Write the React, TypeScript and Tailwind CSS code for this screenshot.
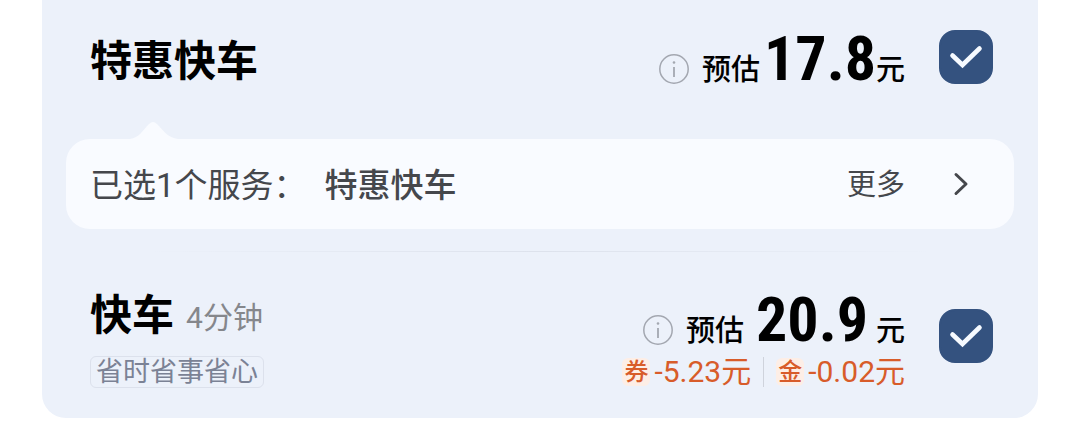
import { useState } from "react";

function InfoIcon() {
  return (
    <svg viewBox="0 0 32 32" className="size-8" fill="none" stroke="#a3a7b0">
      <circle cx="16" cy="16" r="14.2" strokeWidth="1.5" />
      <path d="M16 14v10" strokeWidth="1.8" />
      <circle cx="16" cy="9.5" r="1.3" fill="#a3a7b0" stroke="none" />
    </svg>
  );
}

function Price({ value, spaced }: { value: string; spaced?: boolean }) {
  return (
    <div className="flex items-baseline text-[29px] leading-[50px] font-medium text-black">
      <button type="button" aria-label="价格说明" className="mr-3 self-center pt-2">
        <InfoIcon />
      </button>
      <span>预估</span>
      <span
        className={`font-['Roboto_Condensed',Roboto,sans-serif] text-[62px] font-bold ${
          spaced ? "mr-2 ml-3" : "ml-1"
        }`}
      >
        {value}
      </span>
      <span>元</span>
    </div>
  );
}

function SelectBox({ label }: { label: string }) {
  const [checked, setChecked] = useState(true);

  return (
    <label className="relative block size-[54px] shrink-0">
      <input
        type="checkbox"
        aria-label={label}
        checked={checked}
        onChange={(e) => setChecked(e.target.checked)}
        className="block size-full appearance-none rounded-2xl border-2 border-[#34527f] checked:bg-[#34527f]"
      />
      {checked && (
        <svg
          viewBox="0 0 54 54"
          className="pointer-events-none absolute inset-0 size-full"
          fill="none"
          stroke="#f6faff"
          strokeWidth="4.6"
          strokeLinecap="round"
        >
          <path d="M13.5 25.5L23.5 35L40.5 18.5" />
        </svg>
      )}
    </label>
  );
}

function Discount({ tag, amount }: { tag: string; amount: string }) {
  return (
    <span className="flex items-center gap-1">
      <span className="flex size-7 items-center justify-center rounded-md bg-[#fdeee6] text-2xl font-medium">
        {tag}
      </span>
      <span>{amount}</span>
    </span>
  );
}

export default function App() {
  return (
    <main className="bg-white px-[42px] font-[Roboto,'Noto_Sans_CJK_SC',sans-serif]">
      <div className="rounded-b-3xl bg-[#ecf1fa] px-6 pb-[30px]">
        <section className="flex items-start pt-[30px] pr-[21px] pl-6">
          <h2 className="mt-0.5 text-[42px] leading-[60px] font-bold text-black">特惠快车</h2>
          <div className="mt-1 ml-auto">
            <Price value="17.8" />
          </div>
          <div className="ml-[34px]">
            <SelectBox label="特惠快车" />
          </div>
        </section>

        <div className="mt-[26px] ml-16">
          <svg viewBox="0 0 48 18" className="block h-[18px] w-12" fill="#f9fbff">
            <path d="M0 18C9 17 13 9 19 3Q23-1 27 3C33 9 38 17 48 18Z" />
          </svg>
        </div>
        <div className="flex h-[90px] items-center rounded-3xl bg-[#f9fbff] pr-[37px] pl-6 text-[#45474c]">
          <span className="pt-1 text-[33px]">已选1个服务：</span>
          <span className="ml-[18px] pt-1 text-[33px] font-medium">特惠快车</span>
          <button type="button" className="ml-auto flex items-center gap-9 text-[29px]">
            <span className="pt-1">更多</span>
            <svg
              viewBox="0 0 36 36"
              className="size-9"
              fill="none"
              stroke="currentColor"
              strokeWidth="3"
              strokeLinecap="round"
              strokeLinejoin="round"
            >
              <path d="M15 8.5L25 18L15 27.5" />
            </svg>
          </button>
        </div>

        <div className="mx-20 mt-[22px] h-px bg-linear-to-r from-transparent via-[#dde2ec] to-transparent" />

        <section className="flex items-start pt-[39px] pr-[21px] pl-6">
          <div>
            <div className="flex items-center gap-3">
              <h2 className="text-[42px] leading-[50px] font-bold text-black">快车</h2>
              <span className="pt-1 text-[30px]/8 text-[#85878c]">4分钟</span>
            </div>
            <span className="mt-[15px] flex h-8 items-center rounded-md border border-[#dce1ec] px-[5px] text-[27px] text-[#7b8295]">
              省时省事省心
            </span>
          </div>
          <div className="mt-1 ml-auto flex flex-col items-end">
            <Price value="20.9" spaced />
            <div className="flex items-center text-[30px] leading-8 text-[#d85c2a]">
              <Discount tag="券" amount="-5.23元" />
              <span className="mx-3 h-[30px] w-px bg-[#cfd3dc]" />
              <Discount tag="金" amount="-0.02元" />
            </div>
          </div>
          <div className="mt-[18px] ml-[34px]">
            <SelectBox label="快车" />
          </div>
        </section>
      </div>
    </main>
  );
}
